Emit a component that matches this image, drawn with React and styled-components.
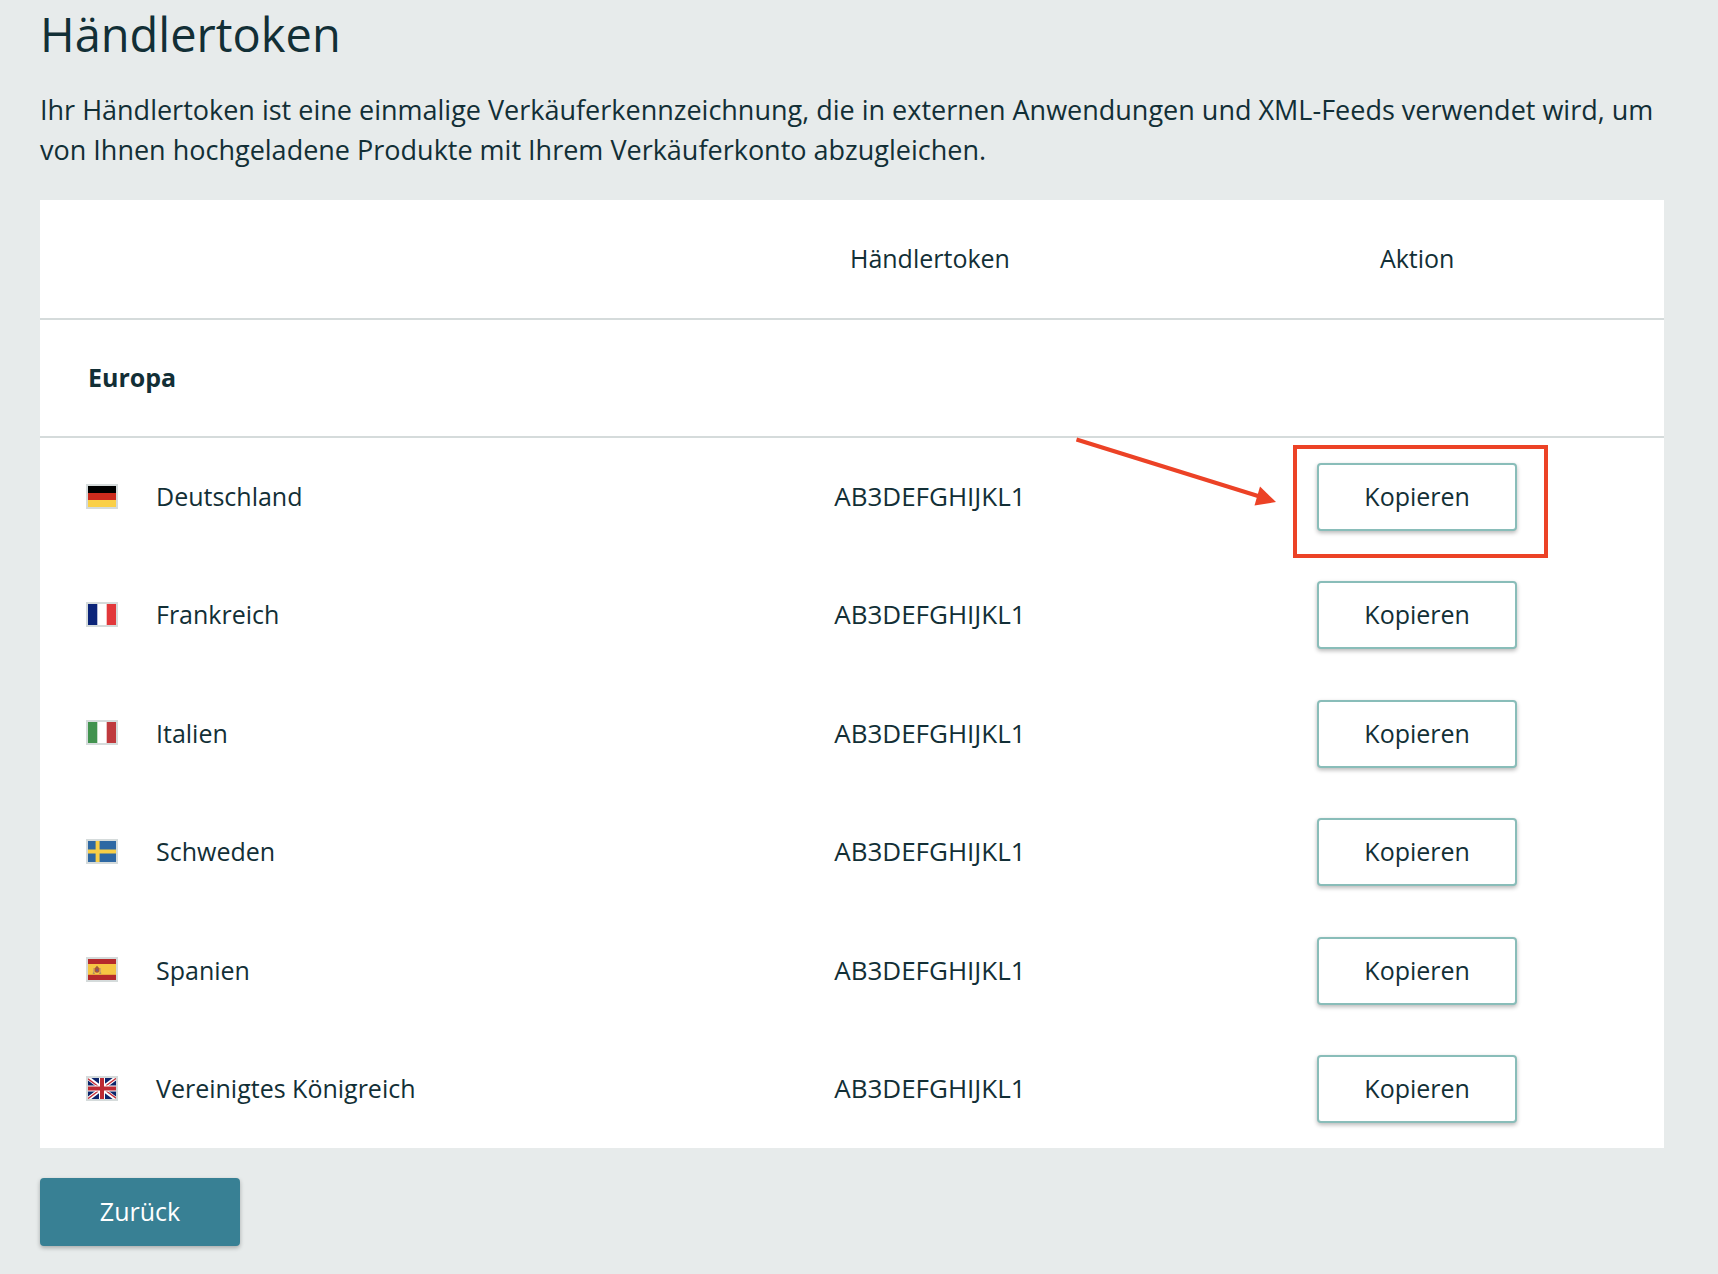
import React from "react";
import styled, { createGlobalStyle } from "styled-components";

const GlobalStyle = createGlobalStyle`
  *, *::before, *::after { box-sizing: border-box; }
  body {
    margin: 0;
    background: #e7ebeb;
    color: #122f36;
    font-family: "Open Sans", "Noto Sans", sans-serif;
    font-weight: 500;
  }
`;

const Page = styled.main`
  padding: 0 54px 24px 40px;
`;

const Title = styled.h1`
  margin: 0;
  padding-top: 2px;
  font-size: 47px;
  line-height: 64px;
  font-weight: 500;
`;

const Intro = styled.p`
  margin: 24px 0 30px;
  font-size: 27px;
  line-height: 40px;
`;

const TokenTable = styled.table`
  width: 100%;
  table-layout: fixed;
  border-spacing: 0;
  background: #fff;
  font-size: 25px;
  line-height: 36px;
`;

const Column = styled.col`
  width: ${(p) => p.$share};
`;

const HeadCell = styled.th`
  height: 120px;
  padding: 0 0 2px;
  border-bottom: 2px solid #d5dbdb;
  font-weight: 500;
  text-align: center;
`;

const RegionCell = styled.th`
  height: 118px;
  padding: 0 48px 2px;
  border-bottom: 2px solid #d5dbdb;
  font-weight: 700;
  text-align: left;
`;

const CountryCell = styled.th`
  height: ${(p) => (p.$tall ? "119px" : "118px")};
  padding: 0 46px 2px;
  font-weight: 500;
  text-align: left;
`;

const Country = styled.div`
  display: flex;
  align-items: center;
  gap: 38px;
`;

const FlagFrame = styled.svg`
  width: 32px;
  height: 25px;
  flex: none;
  border: 2px solid #d5dbdb;
`;

const TokenCell = styled.td`
  padding: 0 0 2px;
  font-size: 26px;
  text-align: center;
`;

const ActionCell = styled.td`
  padding: 0;
`;

const Button = styled.button`
  display: block;
  width: 200px;
  height: 68px;
  padding: 0 0 2px;
  border: 2px solid ${(p) => (p.$primary ? "#388094" : "#89bdb9")};
  border-radius: 4px;
  background: ${(p) => (p.$primary ? "#388094" : "#fff")};
  color: ${(p) => (p.$primary ? "#fff" : "#122f36")};
  box-shadow: 0 2px 4px rgba(0, 0, 0, 0.28);
  font: inherit;
  font-size: 25px;
  line-height: 36px;
  cursor: pointer;
`;

const Action = styled.div`
  position: relative;
  width: 200px;
  margin: 0 auto;
`;

const Highlight = styled.span`
  position: absolute;
  inset: -18px -31px -27px -24px;
  border: 4px solid #ec4226;
  pointer-events: none;
`;

const Arrow = styled.svg`
  position: absolute;
  top: -26px;
  left: -243px;
  width: 204px;
  height: 72px;
  pointer-events: none;
`;

const Footer = styled.div`
  margin-top: 30px;
`;

const flags = {
  de: (
    <>
      <rect width="28" height="7" fill="#000" />
      <rect y="7" width="28" height="7" fill="#cc2b1d" />
      <rect y="14" width="28" height="7" fill="#fad048" />
    </>
  ),
  fr: (
    <>
      <rect width="28" height="21" fill="#fff" />
      <rect width="9.3" height="21" fill="#0b2479" />
      <rect x="18.7" width="9.3" height="21" fill="#e2383b" />
    </>
  ),
  it: (
    <>
      <rect width="28" height="21" fill="#fff" />
      <rect width="9.3" height="21" fill="#42934f" />
      <rect x="18.7" width="9.3" height="21" fill="#bf3a3e" />
    </>
  ),
  se: (
    <>
      <rect width="28" height="21" fill="#2e68a3" />
      <path d="M9.6 0V21M0 10.4H28" stroke="#f8ce46" strokeWidth="4" />
    </>
  ),
  es: (
    <>
      <rect width="28" height="21" fill="#b62a2b" />
      <rect y="5" width="28" height="10.8" fill="#f6c644" />
      <path d="M5.5 9V14M12.5 9V14" stroke="#cfa766" strokeWidth="1" />
      <path d="M6.5 9H11.5V12.5Q9 15 6.5 12.5Z" fill="#a9553f" />
      <path d="M7 9L9 6.8L11 9Z" fill="#98603a" />
      <rect x="8.2" y="10.3" width="1.8" height="1.8" fill="#6c5a86" />
      <path d="M4.8 14.2H6.8M11.2 14.2H13.2" stroke="#8b7a6d" strokeWidth="1" />
    </>
  ),
  gb: (
    <>
      <rect width="28" height="21" fill="#0c246b" />
      <path d="M0 0L28 21M28 0L0 21" stroke="#fff" strokeWidth="4" />
      <path
        d="M0 .8L10 8.3M28 .4L18 7.8M0 20.6L10 13.2M28 20.2L18 12.8"
        stroke="#c5303a"
        strokeWidth="1.4"
      />
      <path d="M14 0V21M0 10.5H28" stroke="#fff" strokeWidth="6" />
      <path d="M14 0V21M0 10.5H28" stroke="#bd2a33" strokeWidth="4" />
    </>
  ),
};

const Flag = ({ code }) => (
  <FlagFrame viewBox="0 0 28 21" aria-hidden="true">
    {flags[code]}
  </FlagFrame>
);

const rows = [
  { code: "de", name: "Deutschland", token: "AB3DEFGHIJKL1", marked: true },
  { code: "fr", name: "Frankreich", token: "AB3DEFGHIJKL1" },
  { code: "it", name: "Italien", token: "AB3DEFGHIJKL1" },
  { code: "se", name: "Schweden", token: "AB3DEFGHIJKL1" },
  { code: "es", name: "Spanien", token: "AB3DEFGHIJKL1" },
  { code: "gb", name: "Vereinigtes Königreich", token: "AB3DEFGHIJKL1" },
];

export default function App() {
  return (
    <>
      <GlobalStyle />
      <Page>
        <Title>Händlertoken</Title>
        <Intro>
          Ihr Händlertoken ist eine einmalige Verkäuferkennzeichnung, die in
          externen Anwendungen und XML-Feeds verwendet wird, um von Ihnen
          hochgeladene Produkte mit Ihrem Verkäuferkonto abzugleichen.
        </Intro>
        <TokenTable>
          <colgroup>
            <Column $share="40%" />
            <Column $share="29.6%" />
            <Column $share="30.4%" />
          </colgroup>
          <thead>
            <tr>
              <HeadCell as="td" />
              <HeadCell scope="col">Händlertoken</HeadCell>
              <HeadCell scope="col">Aktion</HeadCell>
            </tr>
          </thead>
          <tbody>
            <tr>
              <RegionCell colSpan={3} scope="rowgroup">
                Europa
              </RegionCell>
            </tr>
            {rows.map((row, index) => (
              <tr key={row.code}>
                <CountryCell scope="row" $tall={index > 0 && index % 2 === 0}>
                  <Country>
                    <Flag code={row.code} />
                    {row.name}
                  </Country>
                </CountryCell>
                <TokenCell>{row.token}</TokenCell>
                <ActionCell>
                  <Action>
                    <Button type="button">Kopieren</Button>
                    {row.marked && (
                      <>
                        <Highlight />
                        <Arrow viewBox="0 0 204 72" aria-hidden="true">
                          <path
                            d="M2.5 2.5L184 59"
                            stroke="#ec4226"
                            strokeWidth="4"
                          />
                          <path d="M186 49.5L202 65L180.5 68.5Z" fill="#ec4226" />
                        </Arrow>
                      </>
                    )}
                  </Action>
                </ActionCell>
              </tr>
            ))}
          </tbody>
        </TokenTable>
        <Footer>
          <Button type="button" $primary>
            Zurück
          </Button>
        </Footer>
      </Page>
    </>
  );
}
